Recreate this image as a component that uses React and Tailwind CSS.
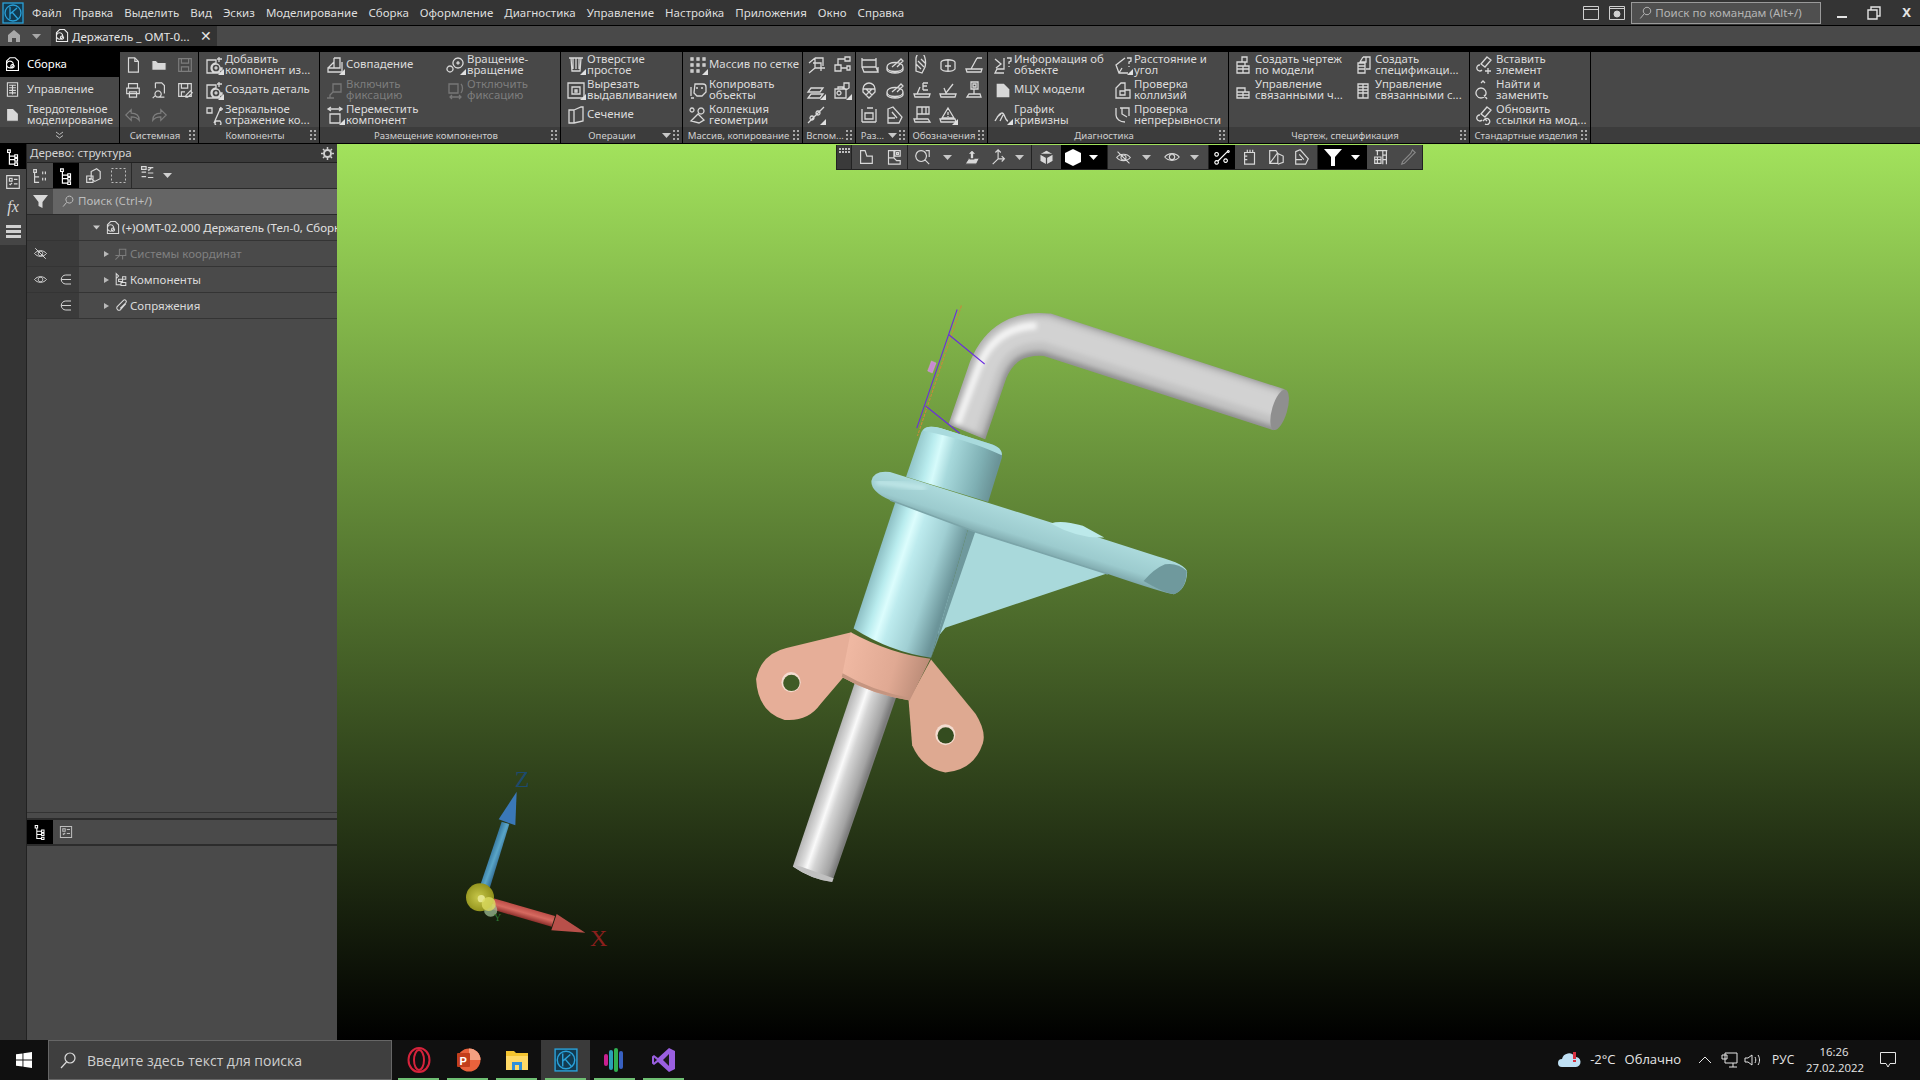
import React from "react";

// stroke paths for the little toolbar icons, 20x20 box
const paths = {
  doc: "M5 2h7l4 4v12H5zM12 2v4h4",
  folder: "M2 16V5h5l2 2h9v9z",
  save: "M3 3h14v14H3zM6 3v5h8V3M6 17v-5h8v5",
  print: "M5 8V3h10v5M3 8h14v6H3zM6 12h8v6H6z",
  preview: "M6 2h7l3 3v9M6 2v6M9 11a3.500 3.500 0 1 0 .01 0M6 16l-3 3M9 18h7",
  saveas: "M3 3h14v14H3zM6 3v5h7V3M6 17v-5h4M11 16l5-5 2 2-5 5h-2z",
  undo: "M8 4L2 10l6 6v-4c4 0 7 1 9 4 0-6-4-8-9-8z",
  redo: "M12 4l6 6-6 6v-4c-4 0-7 1-9 4 0-6 4-8 9-8z",
  add: "M3 5h9v3a5 5 0 1 0 5 5h1v5H3zM12 9a4 4 0 1 1 0 8 4 4 0 0 1 0-8zM12 12a1 1 0 1 0 .01 0M15 2v5M13 4h5",
  mirror: "M3 3h5v5H3zM10 18L17 2M12 16a3 3 0 1 0 4 0zM15 4h4M17 2v4",
  coinc: "M9 3h6v10H3v4h14V7M9 3v10M3 13l6-6",
  fix: "M8 4h8v8H8zM8 12l-3 3v3M2 18h7",
  move: "M3 4h14M6 2L3 4l3 2M14 2l3 2-3 2M5 9h10v9H5z",
  rotate: "M12 3a5 5 0 1 0 .01 0M4 11a3 3 0 1 0 .01 0M12 7a1 1 0 1 0 .01 0",
  unfix: "M3 4h9v9H3zM15 4c2 2 2 6 0 9M4 17h11M6 15l-2 2 2 2M13 15l2 2-2 2",
  hole: "M3 3h14M5 3l1 13h8l1-13M7 3v11M10 3v11M13 3v11",
  cut: "M2 3h16v15H2zM6 7h8v7H6zM9 10h2v2H9z",
  section: "M3 5h5v13H3zM8 5l7-3h2v14l-9 2",
  grid: "M3 3h2v2H3zM9 3h2v2H9zM15 3h2v2h-2zM3 9h2v2H3zM9 9h2v2H9zM15 9h2v2h-2zM3 15h2v2H3zM9 15h2v2H9z",
  copy: "M7 4h8a3 3 0 0 1 3 3v5l-4 4H9l-3-3zM3 7v9M8 8h2M13 8h2M3 18h3",
  coll: "M4 3a2 2 0 1 0 .01 0M13 3a3 3 0 1 0 .01 0M3 16l7-7 6 6-5 3z",
  axes: "M9 3v10H19M9 13l-6 5M9 3h8v8M3 8l6-5M7 8h8v8",
  tree2: "M3 10h6v6H3zM6 10V4h7M13 2h5v4h-5zM9 13h6M15 11h3v4h-3z",
  plane: "M5 8h12l-3 4H2zM5 14h12l-3 4H2z",
  camera: "M3 9h11v9H3zM6 9V7h5v2M7 11a2 2 0 1 0 .01 0M12 3h5v5l-3 2-2-2z",
  pt: "M2 18L18 2M6 11a2 2 0 1 0 .01 0M12 6a2 2 0 1 0 .01 0",
  block: "M3 3v2h14V3M3 5v7h14V5M3 12l2 5h14l-2-5M19 12v5",
  disc: "M2 12c0-6 16-6 16 0s-16 6-16 0zM2 12v3c2 4 14 4 16 0v-3M7 12l6-5 3-3 2 2-6 6",
  weld: "M4 9a6 6 0 1 1 12 0v3l-6 6-6-6zM4 9h12M7 15l6-6M13 15L7 9",
  dim: "M3 4v13M17 4v13M3 17h14M6 8h8v6H6zM8 3h6",
  cone: "M4 3a4 8 0 0 1 9 9l-3 6-6-2zM6 6l6 6M4 9l5 5M9 4l5 5",
  surf: "M3 7c2-3 12-3 14 0v7c-2 3-12 3-14 0zM10 5v12M7 11h6",
  tol: "M13 3h5M13 3L7 14M2 14h16l-1 3H3z",
  txt: "M11 3v7M11 3h5M11 6h4M11 10h5M8 7L5 14M2 14h16l-1 3H3z",
  chk: "M6 8l2 5 7-9M2 14h16l-1 3H3z",
  box: "M7 2h7v7H7zM10 9v5M5 14h11l1 3H3zM9 4h3v3H9z",
  flag: "M5 2v12M5 2h12v7H5zM10 2v7M14 2v7M2 14h14l2 3H3z",
  tri: "M10 3l6 10H4zM10 7v3M10 11v1M2 14h15l1 3H3z",
  info: "M2 4l6 5-5 4M11 3v11H4l-2 4h9M14 3h4v3l-2 1v2M16 11v1",
  solid: "M3 3h8l6 6v9H3z",
  curve: "M2 16c2-3 4-8 7-8s3 8 6 8M4 12l4-3M7 16l3-6",
  dist: "M12 3L3 10l3 8h9M6 18l3-5M14 3h4v3l-2 1v2M16 11v1",
  coll2: "M3 18V8l5-5h4v7h5v8zM7 11h5v4H7z",
  cont: "M3 3v7c0 4 4 7 9 7M7 3h9v8M9 3v6l5 3",
  draw: "M8 2h5v5H8zM3 7h8v4H3zM3 11h12v7H3zM3 14h12M9 11v7",
  link: "M3 8h8v4H3zM3 12h12v6H3zM3 15h12M9 12v6",
  spec: "M9 2h7v12h-4M9 2L6 7h6V2M4 8h7v10H4zM4 11h7M4 14h7",
  spec2: "M4 4h10v14H4zM4 7h10M4 10h10M4 13h10M9 4v14",
  ins: "M12 2l4 3-6 7-4-3zM5 10a3 3 0 1 0 2 5M13 13v6M10 16h6",
  find: "M6 8a5 5 0 1 0 .01 0M9 15l3 4M6 3l2-2 2 2",
  refresh: "M12 2l4 3-6 7-4-3zM5 10a3 3 0 1 0 2 5M10 14a3 3 0 1 1 0 5M8 16l2-2 2 2",
  tree: "M4 2h3v3H4zM6 5v13h6M6 9h6M6 13h6M12 7.500h3v3h-3zM12 11.500h3v3h-3zM12 16.500h3v3h-3z",
  table: "M4 2h12v16H4zM6 5h8M6 8h8M6 11h8M6 14h8M10 5v11",
  checklist: "M3 3h14v14H3zM6 6h3v3H6zM11 7h4M6 12l1 1 2-2M11 12h4",
  hide: "M2 10c4-5 12-5 16 0-4 5-12 5-16 0zM10 7a3 3 0 1 0 .01 0M3 3l14 14",
  eye: "M2 10c4-5 12-5 16 0-4 5-12 5-16 0zM10 7a3 3 0 1 0 .01 0",
  belong: "M16 4H9a6 6 0 0 0 0 12h7M3 10h13",
  clip: "M16 7l-7 8a3 3 0 0 1-4-4l8-8a2 2 0 0 1 3 3l-7 7",
  csys: "M8 4h8v8H8zM8 12l-5 5M3 12h5M12 12v5",
  comps: "M4 2l3 3-3 3zM4 7v9h6M7 9h5v3H7zM10 13h6v4h-6zM12 6h4v3h-4z",
  asm: "M3 17V6l4-4h6l4 4v11zM7 6a4 4 0 1 0 .01 0M10 10a2 2 0 1 0 .01 0",
  search: "M12 3a5 5 0 1 0 .01 0M8 12l-5 6",
  numtree: "M3 3h3v3H3zM4 6v11h5M4 11h5M13 5v3M16 5v3M13 12v3M16 12v3",
  comp3d: "M8 5l6-3 4 3v8l-6 3-4-3zM3 10h7v7H3zM6 13h1v1H6z",
  dotted: "M3 3h14v14H3z",
  layers: "M4 3h5v3H4zM11 4h6M11 6l1 1 3-3M4 9h5M11 10h6M4 14h5M11 15h6",
  box2: "M3 5h6v12H3zM9 5h6v12M6 5V2h6v3M5 9h2M5 13h2",
  cube: "M10 2l7 4v8l-7 4-7-4V6zM3 6l7 4 7-4M10 10v8",
  sketch: "M4 3h5l2 6h6v8H4zM4 3v14",
  sketch2: "M5 3h6v8l3 3h4v4H5zM11 11H5M12 3h6v6h-6zM14 5h2v2h-2z",
  zoom: "M9 3a6 6 0 1 0 .01 0M13 13l5 5M14 3h4v7",
  up: "M10 2l5 5h-3v5H8V7H5zM6 12l-4 6h13l3-6",
  triad: "M9 2v10l7 0M9 12l-6 6M6 5l3-3 3 3M13 9l3 3-3 3",
  nodes: "M4 5a2 2 0 1 0 .01 0M14 12a2 2 0 1 0 .01 0M4 14a2 2 0 1 0 .01 0M17 3a1 1 0 1 0 .01 0M5 15L16 4",
  pad: "M4 5h11v13H4zM7 5V2M10 5V2M13 5V2M4 9h3M4 13h3",
  pad2: "M3 3h7l2 3v11H3zM12 6l6 3v7l-6 2M3 17l9-12",
  pad3: "M3 4l5-2 9 10-3 6H3zM7 7l5 6M3 13h7",
  crane: "M4 3h13M6 3v5M3 10h7v7H3zM3 13h7M6 10v7M12 3v15M16 3v15M12 8h4M12 13h4",
  dropper: "M15 2l3 3-3 3-9 9-3 1 1-3 9-9z",
};

// a few icons are solid shapes rather than outlines
const solid = new Set(["folder", "solid", "cube", "up"]);

function Ico({ n, size = 20, color = "#d8d8d8", mark = false, className = "" }) {
  return (
    <span className={`relative inline-flex shrink-0 ${className}`}>
      <svg width={size} height={size} viewBox="0 0 20 20" fill={solid.has(n) ? color : "none"} stroke={solid.has(n) ? "#484848" : color} strokeWidth="1.300">
        <path d={paths[n]} />
      </svg>
      {mark && (
        <svg className="absolute right-0 bottom-0" width="6" height="6" viewBox="0 0 6 6">
          <polygon points="6,0 6,6 0,6" fill="#e0e0e0" />
        </svg>
      )}
    </span>
  );
}

function Arrow({ color = "#c8c8c8", className = "" }) {
  return (
    <svg className={className} width="9" height="5" viewBox="0 0 9 5">
      <polygon points="0,0 9,0 4.500,5" fill={color} />
    </svg>
  );
}

function Grip() {
  return (
    <svg className="shrink-0" width="6" height="10" viewBox="0 0 6 10" fill="#a8a8a8">
      <rect x="0" y="0" width="2" height="2" /><rect x="4" y="0" width="2" height="2" />
      <rect x="0" y="4" width="2" height="2" /><rect x="4" y="4" width="2" height="2" />
      <rect x="0" y="8" width="2" height="2" /><rect x="4" y="8" width="2" height="2" />
    </svg>
  );
}

function Item({ n, text, dim, mark }) {
  return (
    <div className={`flex items-center h-[25px] pl-[5px] gap-[1px] overflow-hidden ${dim ? "text-[#7d7d7d]" : "text-[#dcdcdc]"}`}>
      <Ico n={n} mark={mark} color={dim ? "#777" : "#d8d8d8"} />
      <span className="whitespace-pre-line leading-[11px] text-[11.4px] pb-[2px]">{text}</span>
    </div>
  );
}

function Group({ w, label, children, arrow, center = true }) {
  return (
    <div className={`${w} shrink-0 flex flex-col border-r border-black`}>
      <div className="h-[75px]">{children}</div>
      <div className="h-[16px] bg-[#3c3c3c] flex items-center px-[3px] gap-[2px]">
        <span className={`flex-1 min-w-0 pt-[2px] text-[9.6px] text-[#cfcfcf] whitespace-nowrap ${center ? "text-center" : ""}`}>{label}</span>
        {arrow && <Arrow />}
        <Grip />
      </div>
    </div>
  );
}

function IconGrid({ cols, items }) {
  return (
    <div className={`grid h-full ${cols === 3 ? "grid-cols-3" : "grid-cols-2"} auto-rows-[25px]`}>
      {items.map((it, i) => (
        <div key={i} className="flex items-center justify-center">
          {it && <Ico n={it[0]} mark={it[1]} />}
        </div>
      ))}
    </div>
  );
}

const menu = ["Файл", "Правка", "Выделить", "Вид", "Эскиз", "Моделирование", "Сборка", "Оформление", "Диагностика", "Управление", "Настройка", "Приложения", "Окно", "Справка"];

function KompasLogo({ size = 22 }) {
  return (
    <svg width={size} height={size} viewBox="0 0 22 22" fill="none" stroke="#2aa0d8" strokeWidth="1.300">
      <rect x="1" y="1" width="20" height="20" fill="#123a50" />
      <circle cx="11" cy="11" r="8" />
      <path d="M8 5v12M8 12l7-6M10 10l6 7" />
    </svg>
  );
}

function MenuBar() {
  return (
    <div className="h-[26px] shrink-0 bg-[#343434] border-b border-black flex items-center text-[11.5px] text-[#dedede]">
      <div className="w-[24px] flex justify-center ml-[1px]"><KompasLogo /></div>
      <div className="flex ml-[7px] gap-[11px]">
        {menu.map((m) => <span key={m}>{m}</span>)}
      </div>
      <div className="ml-auto flex items-center">
        <svg width="16" height="14" viewBox="0 0 16 14" fill="none" stroke="#cfcfcf"><path d="M.5.5h15v13H.5zM.5 3.500h15" /></svg>
        <svg className="ml-[10px]" width="16" height="14" viewBox="0 0 16 14" fill="none" stroke="#cfcfcf"><path d="M.5.5h15v13H.5zM.5 2.500h15" /><circle cx="8" cy="8" r="3" fill="#cfcfcf" /></svg>
        <div className="ml-[6px] w-[190px] h-[22px] bg-[#4f4f4f] border border-[#9a9a9a] flex items-center pl-[6px] gap-[2px] text-[#b4b4b4]">
          <Ico n="search" size={15} color="#b4b4b4" />
          <span>Поиск по командам (Alt+/)</span>
        </div>
        <svg className="ml-[15px]" width="12" height="12" viewBox="0 0 12 12"><rect x="1" y="9" width="10" height="2" fill="#e4e4e4" /></svg>
        <svg className="ml-[19px]" width="14" height="14" viewBox="0 0 14 14" fill="none" stroke="#e4e4e4" strokeWidth="1.400"><path d="M1 4h9v9H1zM4 4V1h9v9h-3" /></svg>
        <span className="ml-[21px] mr-[9px] text-[13px] font-bold text-[#e4e4e4]">X</span>
      </div>
    </div>
  );
}

function TabBar() {
  return (
    <div className="h-[20px] shrink-0 bg-[#494949] flex items-center text-[11.6px] text-[#e4e4e4]">
      <svg className="ml-[7px]" width="14" height="14" viewBox="0 0 14 14"><path d="M7 1l6 5v7H9V9H5v4H1V6z" fill="#a8a8a8" /></svg>
      <Arrow className="ml-[11px]" color="#a8a8a8" />
      <div className="ml-[10px] w-[166px] h-full bg-[#333] flex items-center">
        <Ico n="asm" size={16} color="#eee" className="ml-[3px]" />
        <span className="ml-[2px] pt-[1px]">Держатель _ ОМТ-0...</span>
        <span className="ml-auto mr-[5px] text-[14px] leading-none">✕</span>
      </div>
    </div>
  );
}

function Ribbon() {
  return (
    <div className="h-[92px] shrink-0 flex bg-[#484848] border-b border-black">
      <div className="w-[120px] shrink-0 flex flex-col border-r border-black text-[#dcdcdc] text-[11.4px]">
        <div className="h-[25px] bg-black flex items-center pl-[4px] gap-[6px] text-white"><Ico n="asm" size={17} color="#fff" /> <span className="pb-[2px]">Сборка</span></div>
        <div className="h-[25px] flex items-center pl-[4px] gap-[6px]"><Ico n="table" size={17} /> <span className="pb-[2px]">Управление</span></div>
        <div className="h-[25px] flex items-center pl-[4px] gap-[6px]"><Ico n="solid" size={17} /><span className="leading-[11px] pb-[2px] text-[11px] whitespace-pre-line">{"Твердотельное\nмоделирование"}</span></div>
        <div className="h-[16px] bg-[#3c3c3c] flex items-center justify-center">
          <svg width="9" height="8" viewBox="0 0 9 8" fill="none" stroke="#bbb"><path d="M1 1l3.500 2.500L8 1M1 4.500L4.500 7 8 4.500" /></svg>
        </div>
      </div>

      <Group w="w-[79px]" label="Системная">
        <div className="grid grid-cols-3 auto-rows-[25px]">
          {["doc", "folder", "save", "print", "preview", "saveas", "undo", "redo"].map((n, i) => (
            <div key={n} className="flex items-center justify-center"><Ico n={n} size={18} color={i === 2 || i > 5 ? "#7d7d7d" : "#d8d8d8"} /></div>
          ))}
        </div>
      </Group>

      <Group w="w-[121px]" label="Компоненты">
        <Item n="add" mark text={"Добавить\nкомпонент из..."} />
        <Item n="add" mark text="Создать деталь" />
        <Item n="mirror" text={"Зеркальное\nотражение ко..."} />
      </Group>

      <Group w="w-[241px]" label="Размещение компонентов">
        <div className="grid grid-cols-2">
          <div>
            <Item n="coinc" mark text="Совпадение" />
            <Item n="fix" dim text={"Включить\nфиксацию"} />
            <Item n="move" mark text={"Переместить\nкомпонент"} />
          </div>
          <div className="pl-[1px]">
            <Item n="rotate" mark text={"Вращение-\nвращение"} />
            <Item n="unfix" dim text={"Отключить\nфиксацию"} />
          </div>
        </div>
      </Group>

      <Group w="w-[122px]" label="Операции" arrow>
        <Item n="hole" mark text={"Отверстие\nпростое"} />
        <Item n="cut" mark text={"Вырезать\nвыдавливанием"} />
        <Item n="section" text="Сечение" />
      </Group>

      <Group w="w-[120px]" label="Массив, копирование">
        <Item n="grid" mark text="Массив по сетке" />
        <Item n="copy" text={"Копировать\nобъекты"} />
        <Item n="coll" text={"Коллекция\nгеометрии"} />
      </Group>

      <Group w="w-[53px]" label="Вспом...">
        <IconGrid cols={2} items={[["axes"], ["tree2"], ["plane", true], ["camera", true], ["pt", true], null]} />
      </Group>

      <Group w="w-[53px]" label="Раз..." arrow>
        <IconGrid cols={2} items={[["block"], ["disc"], ["weld"], ["disc"], ["dim"], ["pad3"]]} />
      </Group>

      <Group w="w-[79px]" label="Обозначения">
        <IconGrid cols={3} items={[["cone"], ["surf"], ["tol"], ["txt"], ["chk"], ["box"], ["flag"], ["tri", true], null]} />
      </Group>

      <Group w="w-[241px]" label="Диагностика">
        <div className="grid grid-cols-2">
          <div>
            <Item n="info" text={"Информация об\nобъекте"} />
            <Item n="solid" text="МЦХ модели" />
            <Item n="curve" mark text={"График\nкривизны"} />
          </div>
          <div>
            <Item n="dist" mark text={"Расстояние и\nугол"} />
            <Item n="coll2" text={"Проверка\nколлизий"} />
            <Item n="cont" text={"Проверка\nнепрерывности"} />
          </div>
        </div>
      </Group>

      <Group w="w-[241px]" label="Чертеж, спецификация">
        <div className="grid grid-cols-2">
          <div>
            <Item n="draw" text={"Создать чертеж\nпо модели"} />
            <Item n="link" text={"Управление\nсвязанными ч..."} />
          </div>
          <div>
            <Item n="spec" text={"Создать\nспецификаци..."} />
            <Item n="spec2" text={"Управление\nсвязанными с..."} />
          </div>
        </div>
      </Group>

      <Group w="w-[121px]" label="Стандартные изделия">
        <Item n="ins" text={"Вставить\nэлемент"} />
        <Item n="find" text={"Найти и\nзаменить"} />
        <Item n="refresh" text={"Обновить\nссылки на мод..."} />
      </Group>
      <div className="flex-1 flex flex-col">
        <div className="h-[75px]" />
        <div className="h-[16px] bg-[#3c3c3c]" />
      </div>
    </div>
  );
}

function TreeRow({ left, middle, icon, muted, children }) {
  return (
    <div className="h-[26px] flex border-b border-[#343434]">
      <div className="w-[52px] shrink-0 bg-[#3b3b3b] flex items-center">
        <span className="w-[26px] flex justify-center">{left && <Ico n={left} size={15} color="#d8d8d8" />}</span>
        <span className="w-[26px] flex justify-center">{middle && <Ico n="belong" size={15} color="#d8d8d8" />}</span>
      </div>
      <div className={`flex-1 min-w-0 flex items-center text-[11.5px] whitespace-nowrap overflow-hidden pl-[25px] ${muted ? "text-[#808080]" : "text-[#dadada]"}`}>
        <svg width="5" height="6" viewBox="0 0 5 6" className="mr-[4px] shrink-0"><polygon points="0,0 5,3 0,6" fill="#b8b8b8" /></svg>
        <Ico n={icon} size={16} color={muted ? "#7c7c7c" : "#dadada"} />
        <span className="ml-[1px]">{children}</span>
      </div>
    </div>
  );
}

function LeftPanel() {
  return (
    <>
      <div className="w-[27px] shrink-0 bg-[#343434] border-r border-[#222] flex flex-col">
        <div className="bg-[#454545] h-[101px] flex flex-col items-center">
          <div className="w-full h-[25px] bg-black flex items-center justify-center"><Ico n="tree" size={18} color="#fff" /></div>
          <div className="h-[25px] flex items-center"><Ico n="checklist" size={18} /></div>
          <div className="h-[25px] flex items-center font-['Liberation_Serif',serif] italic text-[16px] text-[#d8d8d8]">fx</div>
          <div className="h-[25px] flex flex-col justify-center gap-[2px]">
            <div className="w-[15px] h-[3px] bg-[#d0d0d0]" /><div className="w-[15px] h-[3px] bg-[#d0d0d0]" /><div className="w-[15px] h-[3px] bg-[#d0d0d0]" />
          </div>
        </div>
      </div>
      <div className="w-[310px] shrink-0 bg-[#4a4a4a] flex flex-col">
        <div className="h-[19px] shrink-0 bg-[#3a3a3a] flex items-center pl-[3px] pr-[3px] text-[11.5px] text-[#d4d4d4] border-b border-[#222]">
          Дерево: структура
          <svg className="ml-auto" width="13" height="13" viewBox="0 0 13 13" fill="none" stroke="#d0d0d0" strokeWidth="2"><circle cx="6.500" cy="6.500" r="3.500" /><path d="M6.500 0v2M6.500 11v2M0 6.500h2M11 6.500h2M2 2l1.500 1.500M9.500 9.500L11 11M11 2L9.500 3.500M2 11l1.500-1.500" strokeWidth="1.500" /></svg>
        </div>
        <div className="h-[26px] shrink-0 flex items-center border-b border-[#2a2a2a]">
          <div className="w-[26px] flex justify-center"><Ico n="numtree" size={18} /></div>
          <div className="w-[26px] h-full bg-black flex items-center justify-center"><Ico n="tree" size={18} color="#fff" /></div>
          <div className="w-[27px] flex justify-center"><Ico n="comp3d" size={18} /></div>
          <div className="w-[26px] h-full flex items-center justify-center border-r border-[#2a2a2a] pr-[1px]">
            <svg width="17" height="17" viewBox="0 0 17 17" fill="none" stroke="#bbb" strokeDasharray="2 2"><path d="M1.500 1.500h14v14h-14z" /></svg>
          </div>
          <div className="ml-[6px]"><Ico n="layers" size={18} /></div>
          <Arrow className="ml-[7px]" color="#d0d0d0" />
        </div>
        <div className="h-[26px] shrink-0 flex items-center border-b border-[#2a2a2a]">
          <div className="w-[26px] flex justify-center">
            <svg width="15" height="15" viewBox="0 0 15 15"><path d="M0 1h15L9.500 8v6l-4-2V8z" fill="#d8d8d8" /></svg>
          </div>
          <div className="flex-1 h-full bg-[#656565] flex items-center pl-[8px] pb-[2px] text-[11.5px] text-[#bdbdbd] gap-[3px]">
            <Ico n="search" size={14} color="#c4c4c4" />
            Поиск (Ctrl+/)
          </div>
        </div>
        <div className="h-[26px] shrink-0 flex border-b border-[#343434]">
          <div className="w-[52px] shrink-0 bg-[#3b3b3b]" />
          <div className="flex-1 min-w-0 flex items-center text-[11.5px] text-[#e0e0e0] whitespace-nowrap overflow-hidden pl-[14px]">
            <svg width="7" height="5" viewBox="0 0 9 5" className="mr-[5px] shrink-0"><polygon points="0,0 9,0 4.500,5" fill="#c8c8c8" /></svg>
            <Ico n="asm" size={16} />
            <span className="ml-[1px]">(+)ОМТ-02.000 Держатель (Тел-0, Сборка)</span>
          </div>
        </div>
        <TreeRow left="hide" icon="csys" muted>Системы координат</TreeRow>
        <TreeRow left="eye" middle icon="comps">Компоненты</TreeRow>
        <TreeRow middle icon="clip">Сопряжения</TreeRow>
        <div className="flex-1 border-b border-[#333]" />
        <div className="h-[7px] shrink-0 border-b-2 border-[#2c2c2c]" />
        <div className="h-[26px] shrink-0 flex border-b-2 border-[#2c2c2c]">
          <div className="w-[26px] bg-black flex items-center justify-center"><Ico n="tree" size={16} color="#fff" /></div>
          <div className="w-[26px] flex items-center justify-center"><Ico n="checklist" size={16} color="#bdbdbd" /></div>
        </div>
        <div className="h-[194px] shrink-0" />
      </div>
    </>
  );
}

function FloatBar() {
  const sep = "flex items-center h-full border-r border-[#222]";
  return (
    <div className="absolute left-[499px] top-[1px] h-[25px] w-[587px] flex bg-[#494949] border border-[#222] border-t-0">
      <div className={`${sep} w-[15px] bg-[#3a3a3a] justify-center items-start pt-[3px]`}>
        <svg width="11" height="5" viewBox="0 0 11 5" fill="#c0c0c0"><rect width="2" height="2" /><rect x="3" width="2" height="2" /><rect x="6" width="2" height="2" /><rect x="9" width="2" height="2" /><rect y="3" width="2" height="2" /><rect x="3" y="3" width="2" height="2" /><rect x="6" y="3" width="2" height="2" /><rect x="9" y="3" width="2" height="2" /></svg>
      </div>
      <div className={`${sep} w-[56px] justify-around`}><Ico n="sketch" size={18} /><Ico n="sketch2" size={18} /></div>
      <div className={`${sep} w-[124px] pl-[5px]`}>
        <Ico n="zoom" size={18} /><Arrow className="ml-[12px]" /><Ico n="up" size={18} className="ml-[11px]" /><Ico n="triad" size={18} className="ml-[9px]" /><Arrow className="ml-[7px]" />
      </div>
      <div className="flex h-full w-[76px] border-r border-[#222]">
        <div className="w-[29px] flex items-center justify-center"><Ico n="cube" size={19} /></div>
        <div className="flex-1 bg-black flex items-center pl-[4px] gap-[8px]">
          <svg width="16" height="17" viewBox="0 0 16 17" fill="#fff"><polygon points="8,0 16,4 16,13 8,17 0,13 0,4" /></svg>
          <Arrow color="#fff" />
        </div>
      </div>
      <div className={`${sep} w-[101px] pl-[7px]`}>
        <Ico n="hide" size={17} /><Arrow className="ml-[10px]" /><Ico n="eye" size={18} className="ml-[12px]" /><Arrow className="ml-[9px]" />
      </div>
      <div className="h-full w-[26px] bg-black flex items-center justify-center"><Ico n="nodes" size={18} color="#fff" /></div>
      <div className={`${sep} w-[83px] justify-around px-[2px]`}><Ico n="pad" size={18} /><Ico n="pad2" size={18} /><Ico n="pad3" size={18} /></div>
      <div className="h-full w-[49px] bg-black flex items-center pl-[6px] gap-[9px]">
        <svg width="18" height="18" viewBox="0 0 18 18"><path d="M0 1h18L11 9v9H7V9z" fill="#fff" /></svg>
        <Arrow color="#fff" />
      </div>
      <div className="flex-1 flex items-center justify-around"><Ico n="crane" size={18} /><Ico n="dropper" size={18} color="#888" /></div>
    </div>
  );
}

// the part, in crop coordinates of a 1568x1568 box stretched over 560x610
function Model() {
  const tube = "M635 365L695 205Q740 105 860 115L1510 308";
  return (
    <svg className="absolute left-[403px] top-[146px]" width="560" height="610" viewBox="0 0 1568 1568" preserveAspectRatio="none">
      <defs>
        <filter id="soft" x="-20%" y="-20%" width="140%" height="140%"><feGaussianBlur stdDeviation="7" /></filter>
        <mask id="tubeMask" maskUnits="userSpaceOnUse" x="0" y="0" width="1568" height="1568">
          <path d={tube} fill="none" stroke="#fff" strokeWidth="110" />
        </mask>
        <linearGradient id="rod" gradientUnits="userSpaceOnUse" x1="325" y1="1000" x2="433" y2="1040">
          <stop offset="0" stopColor="#b4b4b4" /><stop offset=".22" stopColor="#dcdcdc" /><stop offset=".34" stopColor="#fafafa" /><stop offset=".5" stopColor="#d4d4d4" /><stop offset=".85" stopColor="#a4a4a4" /><stop offset="1" stopColor="#7c7c7c" />
        </linearGradient>
        <linearGradient id="body" gradientUnits="userSpaceOnUse" x1="318" y1="870" x2="523" y2="944">
          <stop offset="0" stopColor="#8dbfc4" /><stop offset=".18" stopColor="#b9ecee" /><stop offset=".3" stopColor="#dcfdfd" /><stop offset=".42" stopColor="#bdebee" /><stop offset=".72" stopColor="#a0cfd3" /><stop offset="1" stopColor="#6b9499" />
        </linearGradient>
        <linearGradient id="collar" gradientUnits="userSpaceOnUse" x1="465" y1="480" x2="695" y2="545">
          <stop offset="0" stopColor="#8fc2c6" /><stop offset=".2" stopColor="#b9ecee" /><stop offset=".3" stopColor="#d6fbfb" /><stop offset=".45" stopColor="#a7d9dc" /><stop offset=".8" stopColor="#7fb0b4" /><stop offset="1" stopColor="#6a9397" />
        </linearGradient>
        <linearGradient id="flange" gradientUnits="userSpaceOnUse" x1="720" y1="545" x2="694" y2="635">
          <stop offset="0" stopColor="#aedcde" /><stop offset=".7" stopColor="#9ccbce" /><stop offset="1" stopColor="#7ea8ac" />
        </linearGradient>
        <linearGradient id="salmon" gradientUnits="userSpaceOnUse" x1="295" y1="930" x2="520" y2="1000">
          <stop offset="0" stopColor="#f0b9a3" /><stop offset=".6" stopColor="#e0a993" /><stop offset="1" stopColor="#b98a76" />
        </linearGradient>
      </defs>

      {/* bent handle */}
      <g mask="url(#tubeMask)">
        <path d={tube} fill="none" stroke="#8f8f8f" strokeWidth="114" />
        <g filter="url(#soft)" fill="none">
          <path d={tube} stroke="#c2c2c2" strokeWidth="98" transform="translate(-2 -5)" />
          <path d={tube} stroke="#d2d2d2" strokeWidth="60" transform="translate(-3 -10)" />
          <path d="M608 345L665 205Q710 95 830 92" stroke="#f6f6f6" strokeWidth="18" />
          <path d="M572 345L627 205Q682 60 830 58" stroke="#a8a8a8" strokeWidth="12" />
        </g>
      </g>
      <ellipse cx="1511" cy="308" rx="21" ry="54" transform="rotate(18 1511 308)" fill="#8f8f8f" />

      {/* lower rod */}
      <path d="M325 1000L148 1482Q200 1515 258 1522L440 1040z" fill="url(#rod)" />
      <path d="M148 1482Q150 1476 170 1482L262 1512L258 1522Q200 1515 148 1482z" fill="#c0c0c0" />

      {/* gusset, sleeve, upper collar */}
      <path d="M660 615L1040 725L575 868L560 885L540 880z" fill="#a9d9db" />
      <path d="M318 870L435 545L640 610L565 850L535 945Q420 930 318 870z" fill="url(#body)" />
      <path d="M640 610L660 618L560 885L535 945z" fill="#6f999d" />
      <path d="M465 480L508 365Q518 345 560 355L700 395Q738 405 733 432L695 545z" fill="url(#collar)" />
      <path d="M512 362Q520 345 560 355L700 395Q736 405 733 425Q640 385 512 362z" fill="#a9dadd" />

      {/* flange */}
      <path d="M368 490Q375 463 420 468L1000 635L1170 685Q1250 705 1252 725Q1250 770 1215 782Q1190 780 1030 730L660 622L420 540Q365 518 368 490z" fill="url(#flange)" />
      <path d="M420 540L660 622L1030 730" fill="none" stroke="#7ba5a9" strokeWidth="4" />
      <path d="M1130 748Q1160 716 1190 705Q1225 700 1251 722Q1250 770 1215 782Q1190 780 1130 748z" fill="#6f999d" />
      <path d="M870 600Q900 590 960 606L1020 636Q950 640 870 600z" fill="#bce9ea" />
      <path d="M380 495Q430 498 520 510" fill="none" stroke="#d4f6f6" strokeWidth="8" filter="url(#soft)" />

      {/* wing nut */}
      <path d="M312 880L130 920Q60 935 45 1000Q50 1085 125 1105Q190 1110 225 1065L290 995z" fill="#e6ae98" />
      <path d="M535 950L660 1090Q690 1135 680 1165Q655 1235 575 1240Q510 1230 482 1170L472 1055z" fill="#dea991" />
      <path d="M310 880Q420 935 533 948L475 1055Q370 1040 285 995z" fill="url(#salmon)" />
      <path d="M285 995Q370 1040 475 1055L474 1048Q370 1030 287 985z" fill="#c59580" />
      <ellipse cx="143" cy="1008" rx="27" ry="26" fill="#f4dcd0" />
      <ellipse cx="144" cy="1010" rx="23" ry="21" fill="#405c26" />
      <ellipse cx="575" cy="1143" rx="28" ry="27" fill="#f4dcd0" />
      <ellipse cx="576" cy="1145" rx="23" ry="21" fill="#344c1f" />

      {/* dimension lines */}
      <path d="M620 40L497 375" stroke="#c98a3a" strokeWidth="3" fill="none" strokeDasharray="8 3" />
      <path d="M608 50L495 355M585 115L685 190M520 298L615 368" stroke="#6a2be0" strokeWidth="3" fill="none" />
      <rect x="530" y="185" width="28" height="14" transform="rotate(-68 545 200)" fill="#c88bd0" stroke="#e0a0e0" />
    </svg>
  );
}

function Triad() {
  return (
    <svg className="absolute left-[103px] top-[606px]" width="200" height="210" viewBox="0 0 600 630">
      <defs>
        <radialGradient id="ball" cx=".45" cy=".5" r=".55"><stop offset="0" stopColor="#c8c84a" /><stop offset="1" stopColor="#8f8f1a" /></radialGradient>
        <linearGradient id="zshaft" gradientUnits="userSpaceOnUse" x1="150" y1="300" x2="190" y2="315"><stop offset="0" stopColor="#2f6f98" /><stop offset=".5" stopColor="#5aa6c8" /><stop offset="1" stopColor="#2a5f88" /></linearGradient>
        <linearGradient id="xshaft" gradientUnits="userSpaceOnUse" x1="255" y1="470" x2="245" y2="505"><stop offset="0" stopColor="#b94a44" /><stop offset=".5" stopColor="#d66a60" /><stop offset="1" stopColor="#8a2d2a" /></linearGradient>
      </defs>
      <path d="M122 402L185 215L208 222L150 412z" fill="url(#zshaft)" />
      <polygon points="230,125 176,208 226,226" fill="#3a78b8" />
      <path d="M160 445L345 498L335 530L155 478z" fill="url(#xshaft)" />
      <polygon points="436,548 350,492 334,541" fill="#b8504a" />
      <circle cx="152" cy="480" r="20" fill="#a8c8a0" opacity=".7" />
      <circle cx="120" cy="442" r="42" fill="url(#ball)" />
      <circle cx="124" cy="446" r="11" fill="#e4e48c" />
      <circle cx="146" cy="462" r="21" fill="#dcdc60" opacity=".8" />
      <text x="224" y="110" fontFamily="'Liberation Serif', serif" fontSize="72" fill="#1c4a6e">Z</text>
      <text x="450" y="588" fontFamily="'Liberation Serif', serif" fontSize="72" fill="#8c1f1d">X</text>
      <text x="162" y="512" fontFamily="'Liberation Serif', serif" fontSize="30" fill="#2f7a35">Y</text>
    </svg>
  );
}

const taskIcons = [
  <svg key="o" width="24" height="26" viewBox="0 0 24 26" fill="none" stroke="#d6233c" strokeWidth="2"><ellipse cx="12" cy="13" rx="10.500" ry="12" /><ellipse cx="12" cy="13" rx="5" ry="10" /></svg>,
  <svg key="p" width="26" height="26" viewBox="0 0 26 26"><circle cx="14" cy="13" r="11.500" fill="#e8623c" /><path d="M14 13V1.500A11.500 11.500 0 0 1 25.500 13z" fill="#f4a081" /><rect x="2" y="6" width="13" height="14" rx="1" fill="#c23e1c" /><text x="4.500" y="17.500" fontSize="11" fontWeight="700" fontFamily="'Liberation Sans', sans-serif" fill="#fff">P</text></svg>,
  <svg key="f" width="24" height="24" viewBox="0 0 24 24"><path d="M1 3h8l2 2h12v17H1z" fill="#f4c430" /><path d="M1 8h22v14H1z" fill="#ffd966" /><path d="M7 22v-8h10v8h-3v-5h-4v5z" fill="#2f8fd8" /></svg>,
  <KompasLogo key="k" size={24} />,
  <svg key="r" width="24" height="26" viewBox="0 0 24 26"><rect x="1" y="7" width="4" height="12" rx="2" fill="#c82090" /><rect x="6" y="3" width="4" height="20" rx="2" fill="#2a9fb8" /><rect x="11" y="1" width="4" height="24" rx="2" fill="#30b050" /><rect x="16" y="4" width="4" height="18" rx="2" fill="#3860c0" /></svg>,
  <svg key="v" width="24" height="26" viewBox="0 0 24 26"><path d="M17 1l6 3v18l-6 3L6 15l-4 3-2-1.500V9.500L2 8l4 3z" fill="#9a5fe0" /><path d="M17 7l-6 6 6 6z" fill="#1a1a1a" /><path d="M2 10.500l3 2.500-3 2.500z" fill="#1a1a1a" /></svg>,
];

function Taskbar() {
  return (
    <div className="h-[40px] shrink-0 bg-[#101010] flex items-center text-[#e6e6e6]">
      <div className="w-[48px] flex justify-center">
        <svg width="16" height="16" viewBox="0 0 16 16" fill="#fff"><path d="M0 2.300L6.500 1.400V7.500H0zM7.400 1.300L16 0V7.500H7.400zM0 8.400H6.500V14.600L0 13.700zM7.400 8.400H16V16L7.400 14.700z" /></svg>
      </div>
      <div className="w-[344px] h-full bg-[#3f3f3f] border border-[#666] flex items-center pl-[10px] font-['Open_Sans',sans-serif] text-[14px] text-[#cfcfcf]">
        <svg width="18" height="18" viewBox="0 0 18 18" fill="none" stroke="#dcdcdc" strokeWidth="1.200"><circle cx="11" cy="7" r="5" /><path d="M7.500 11L2 17" /></svg>
        <span className="ml-[10px]">Введите здесь текст для поиска</span>
      </div>
      <div className="flex h-full ml-[2px]">
        {taskIcons.map((ic, i) => (
          <div key={i} className={`relative w-[49px] h-full flex items-center justify-center ${i === 3 ? "bg-[#3a3a3a]" : ""}`}>
            {ic}
            <div className="absolute left-[4px] right-[4px] bottom-0 h-[2px] bg-[#6fbf73]" />
          </div>
        ))}
      </div>
      <div className="ml-auto flex items-center font-['Open_Sans',sans-serif] text-[12px]">
        <svg width="24" height="18" viewBox="0 0 24 18"><path d="M5 16a4 4 0 0 1 0-8 7 7 0 0 1 13-2 5 5 0 0 1 1 10z" fill="#bfe0f4" /><rect x="16" y="1" width="3" height="7" fill="#d83040" /><rect x="16" y="9" width="3" height="2" fill="#d83040" /></svg>
        <span className="ml-[9px] text-[13px]">-2°C</span>
        <span className="ml-[9px] text-[13px]">Облачно</span>
        <svg className="ml-[17px]" width="14" height="8" viewBox="0 0 14 8" fill="none" stroke="#e6e6e6"><path d="M1 7l6-6 6 6" /></svg>
        <svg className="ml-[9px]" width="17" height="16" viewBox="0 0 17 16" fill="none" stroke="#e6e6e6"><path d="M4 1h12v10H4zM8 15h8M12 11v4M1 3h5v4H1z" /></svg>
        <svg className="ml-[6px]" width="17" height="14" viewBox="0 0 17 14" fill="none" stroke="#e6e6e6"><path d="M1 5h3l4-3v10L4 9H1zM11 4c1 2 1 4 0 6M14 2c2 3 2 7 0 10" /></svg>
        <span className="ml-[11px] w-[25px]">РУС</span>
        <div className="ml-[9px] w-[56px] text-center text-[11.4px] leading-[16px]"><div>16:26</div><div>27.02.2022</div></div>
        <svg className="ml-[18px] mr-[24px]" width="16" height="16" viewBox="0 0 16 16" fill="none" stroke="#e6e6e6"><path d="M.5.5h15v11H10L8 15l-2-3.500H.5z" /></svg>
      </div>
    </div>
  );
}

export default function App() {
  return (
    <div className="w-[1920px] h-[1080px] flex flex-col overflow-hidden bg-black font-['Noto_Sans',sans-serif]">
      <MenuBar />
      <TabBar />
      <div className="h-[6px] shrink-0 bg-black" />
      <Ribbon />
      <div className="flex-1 min-h-0 flex">
        <LeftPanel />
        <div className="relative flex-1 bg-[linear-gradient(180deg,#a2e25c_0%,#000_100%)]">
          <FloatBar />
          <Model />
          <Triad />
        </div>
      </div>
      <Taskbar />
    </div>
  );
}
